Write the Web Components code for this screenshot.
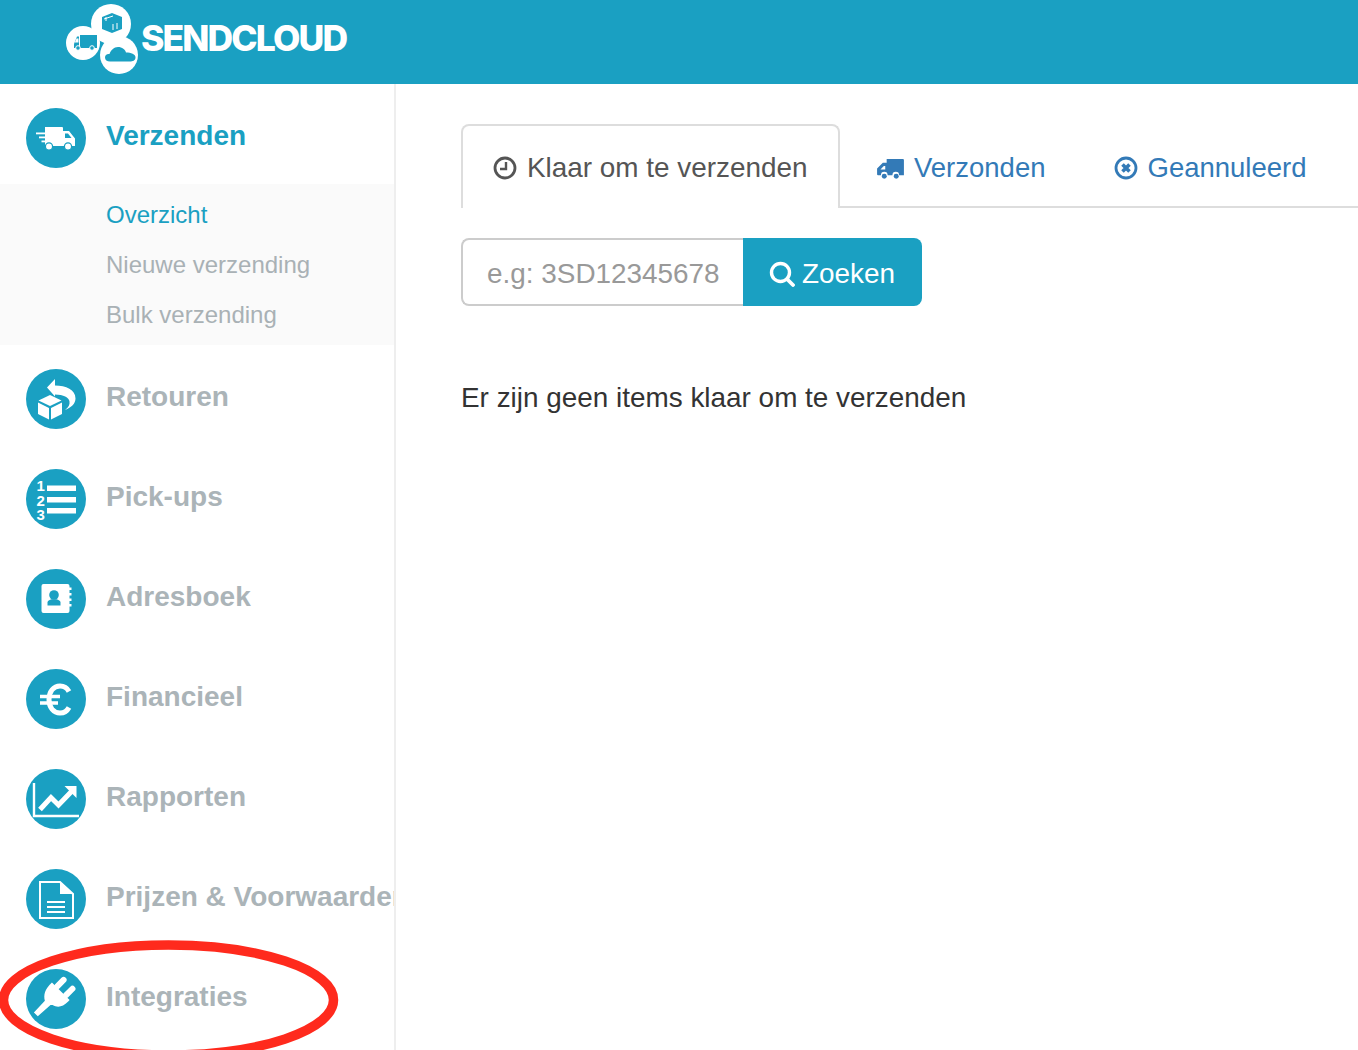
<!DOCTYPE html>
<html lang="nl">
<head>
<meta charset="utf-8">
<title>Sendcloud</title>
<style>
  html, body { margin: 0; height: 1050px; overflow: hidden; background: #fff; }
  body { font-family: "Liberation Sans", Arial, sans-serif; color: #333; }
</style>
</head>
<body>
<sc-app>
  <sc-header slot="header"></sc-header>

  <sc-sidebar slot="sidebar">
    <sc-nav-item active label="Verzenden">
      <svg slot="icon" viewBox="0 0 60 60" width="60" height="60" fill="#fff">
        <path d="M19 19h17a1 1 0 0 1 1 1v3h6l6 7.500v7.500h-30z"/>
        <path fill="#1aa0c2" d="M39 25.500h3l3.500 4.500h-6.500z"/>
        <rect x="10" y="24.500" width="9" height="1.800"/>
        <rect x="13" y="28.500" width="6" height="1.800"/>
        <rect x="15.500" y="32.500" width="3.500" height="1.800"/>
        <circle cx="23" cy="38.500" r="3.600" stroke="#1aa0c2" stroke-width="1.300"/>
        <circle cx="42" cy="38.500" r="3.600" stroke="#1aa0c2" stroke-width="1.300"/>
      </svg>
    </sc-nav-item>
    <sc-sub-nav>
      <sc-sub-item active>Overzicht</sc-sub-item>
      <sc-sub-item>Nieuwe verzending</sc-sub-item>
      <sc-sub-item>Bulk verzending</sc-sub-item>
    </sc-sub-nav>
    <sc-nav-item label="Retouren">
      <svg slot="icon" viewBox="0 0 60 60" width="60" height="60" fill="#fff">
        <path d="M24 26l11.500 5.500-11.500 5.500-11.500-5.500z"/>
        <path d="M12 33.500l11 5.500v11.500l-11-5.500zM25 39l11-5.500v11.500l-11 5.500z"/>
        <path d="M21 18.500l8-8.500v6.500c11 0 20.500 4 20.500 13 0 5-4 9-10.500 11.500 3.500-2.500 5-5.500 4.500-8.500-.5-4-6-7-14.500-7v2z"/>
      </svg>
    </sc-nav-item>
    <sc-nav-item label="Pick-ups">
      <svg slot="icon" viewBox="0 0 60 60" width="60" height="60" fill="#fff">
        <text x="10.500" y="22" font-family="Liberation Sans" font-weight="700" font-size="15">1</text>
        <text x="10.500" y="36.500" font-family="Liberation Sans" font-weight="700" font-size="15">2</text>
        <text x="10.500" y="51" font-family="Liberation Sans" font-weight="700" font-size="15">3</text>
        <rect x="21" y="16.500" width="29" height="5.500"/>
        <rect x="21" y="28" width="29" height="5.500"/>
        <rect x="21" y="39" width="29" height="5.500"/>
      </svg>
    </sc-nav-item>
    <sc-nav-item label="Adresboek">
      <svg slot="icon" viewBox="0 0 60 60" width="60" height="60">
        <path fill="#fff" d="M17.500 15h24a2 2 0 0 1 2 2v1.500h2v2.500h-2v3h2v2.500h-2v3h2v2.500h-2v3h2v2.500h-2v4.500a2 2 0 0 1-2 2h-24a2 2 0 0 1-2-2v-25a2 2 0 0 1 2-2z"/>
        <circle cx="28" cy="26" r="4.800" fill="#1aa0c2"/>
        <path fill="#1aa0c2" d="M21.500 36.500v-3c0-1.800 2-2.800 4-3.300h5c2 .5 4 1.500 4 3.300v3z"/>
      </svg>
    </sc-nav-item>
    <sc-nav-item label="Financieel">
      <svg slot="icon" viewBox="0 0 60 60" width="60" height="60" fill="none" stroke="#fff">
        <path stroke-width="5" d="M43 22.500c-2-3.800-5-5.500-9-5.500-6.500 0-11 5.500-11 13.500s4.500 13.500 11 13.500c4 0 7-1.700 9-5.500"/>
        <path stroke-width="3.400" d="M14 27.500h20M14 34h18"/>
      </svg>
    </sc-nav-item>
    <sc-nav-item label="Rapporten">
      <svg slot="icon" viewBox="0 0 60 60" width="60" height="60">
        <path fill="none" stroke="#fff" stroke-width="2.400" d="M8 14v33h45"/>
        <path fill="none" stroke="#fff" stroke-width="5" d="M14 40.500l11-12 7.500 7.500 13-13.500"/>
        <path fill="#fff" d="M38.500 17h12v12z"/>
      </svg>
    </sc-nav-item>
    <sc-nav-item label="Prijzen &amp; Voorwaarden">
      <svg slot="icon" viewBox="0 0 60 60" width="60" height="60">
        <path fill="none" stroke="#fff" stroke-width="2" d="M14 13h20l13 12v24h-33z"/>
        <path fill="#fff" d="M34 13v12h13z"/>
        <path fill="none" stroke="#fff" stroke-width="2" d="M21 33h18M21 38h18M21 43h18"/>
      </svg>
    </sc-nav-item>
    <sc-nav-item label="Integraties">
      <svg slot="icon" viewBox="0 0 60 60" width="60" height="60" fill="#fff">
        <path d="M14.500 19h25v2c0 8-3 12-8.500 13.500l-1.500 1.500-1 17h-5.500l-.5-16c-5-3-8.500-8-8-18z" transform="rotate(45 27 30)"/>
        <rect x="18" y="6" width="6" height="15" rx="3" transform="rotate(45 27 30)"/>
        <rect x="30.500" y="6" width="6" height="15" rx="3" transform="rotate(45 27 30)"/>
      </svg>
    </sc-nav-item>
  </sc-sidebar>

  <sc-main slot="main">
    <sc-tabs>
      <sc-tab active label="Klaar om te verzenden">
        <svg slot="icon" viewBox="0 0 24 24" width="24" height="24" fill="none" stroke="#555">
          <circle cx="12" cy="12" r="10" stroke-width="2.800"/>
          <path stroke-width="2.400" d="M13 6v7h-6"/>
        </svg>
      </sc-tab>
      <sc-tab label="Verzonden">
        <svg slot="icon" viewBox="0 0 28 24" width="27" height="23" fill="#337ab7">
          <path d="M10 2h17a1 1 0 0 1 1 1v16h-5a3.500 3.500 0 0 0-7 0h-5a3.500 3.500 0 0 0-7 0h-3a1 1 0 0 1-1-1v-6l6-6h4z"/>
          <path fill="#fff" d="M3.500 13l3.500-3.500h1.500v3.500z"/>
          <circle cx="7.500" cy="20" r="2.600"/><circle cx="20" cy="20" r="2.600"/>
        </svg>
      </sc-tab>
      <sc-tab label="Geannuleerd">
        <svg slot="icon" viewBox="0 0 24 24" width="24" height="24" fill="none" stroke="#337ab7">
          <circle cx="12" cy="12" r="10" stroke-width="2.800"/>
          <path stroke-width="3.600" d="M8.500 8.500l7 7M15.500 8.500l-7 7"/>
        </svg>
      </sc-tab>
    </sc-tabs>
    <sc-search placeholder="e.g: 3SD12345678" action="Zoeken"></sc-search>
    <sc-empty>Er zijn geen items klaar om te verzenden</sc-empty>
  </sc-main>

  <sc-annotation slot="overlay"></sc-annotation>
</sc-app>

<script>
// small helper so every element just declares its shadow markup
function shadow(el, html) {
  const root = el.attachShadow({ mode: "open" });
  root.innerHTML = html;
  return root;
}

class ScApp extends HTMLElement {
  constructor() {
    super();
    shadow(this, `
      <style>
        :host { display: block; position: relative; width: 1358px; height: 1050px; overflow: hidden; }
        .body { display: flex; height: 966px; }
      </style>
      <slot name="header"></slot>
      <div class="body">
        <slot name="sidebar"></slot>
        <slot name="main"></slot>
      </div>
      <slot name="overlay"></slot>
    `);
  }
}

class ScHeader extends HTMLElement {
  constructor() {
    super();
    shadow(this, `
      <style>
        :host { display: flex; align-items: flex-start; height: 84px; background: #1aa0c2; padding-left: 66px; }
        svg { display: block; flex: none; }
        .name {
          font: 800 35.500px/78px Inter, Lato, "Liberation Sans", sans-serif;
          color: #fff;
          letter-spacing: -1.900px;
          margin-left: 3px;
        }
      </style>
      <svg viewBox="0 0 72 74" width="72" height="74">
        <circle cx="17" cy="43" r="17" fill="#fff"/>
        <circle cx="45" cy="24" r="20" fill="#fff"/>
        <circle cx="53" cy="55" r="19" fill="#fff"/>
        <path fill="#1aa0c2" d="M14 35h17v13h-17zM13 36.500v11.500h-5v-4l3-7.500z"/>
        <path fill="#fff" d="M10.500 38.500h2v4h-3.700z"/>
        <circle cx="12" cy="48" r="2.300" fill="#1aa0c2" stroke="#fff"/>
        <circle cx="26" cy="48" r="2.300" fill="#1aa0c2" stroke="#fff"/>
        <path fill="#1aa0c2" d="M46 13l10 4v12l-10 4-10-4v-12z"/>
        <path fill="none" stroke="#fff" stroke-width="1" d="M38 19l9-3M40 17v4M47 30v-6M51 29v-6"/>
        <path fill="#1aa0c2" d="M44 61.500c-3 0-5-1.500-5-4s2-4 4.500-3.500c1-3.500 4.500-7 8.500-7s7.500 2.500 8 5.500c5 0 9.500 1.500 9.500 5 0 3-3 4-5.500 4z"/>
      </svg>
      <span class="name">SENDCLOUD</span>
    `);
  }
}

class ScSidebar extends HTMLElement {
  constructor() {
    super();
    shadow(this, `
      <style>
        :host {
          display: block;
          flex: none;
          width: 394px;
          height: 966px;
          overflow: hidden;
          border-right: 2px solid #eee;
        }
      </style>
      <slot></slot>
    `);
  }
}

class ScNavItem extends HTMLElement {
  constructor() {
    super();
    const root = shadow(this, `
      <style>
        :host {
          display: flex;
          align-items: center;
          gap: 20px;
          box-sizing: border-box;
          height: 100px;
          padding: 24px 0 16px 26px;
          white-space: nowrap;
        }
        .icon { flex: none; width: 60px; height: 60px; border-radius: 50%; background: #1aa0c2; overflow: hidden; }
        ::slotted(svg) { display: block; }
        .label { font: 700 28px/40px "Liberation Sans", Arial, sans-serif; color: #abb4b8; margin-top: -5px; }
        :host([active]) .label { color: #1aa0c2; }
      </style>
      <span class="icon"><slot name="icon"></slot></span>
      <span class="label"></span>
    `);
    root.querySelector(".label").textContent = this.getAttribute("label");
  }
}

class ScSubNav extends HTMLElement {
  constructor() {
    super();
    shadow(this, `
      <style>
        :host { display: block; height: 161px; box-sizing: border-box; padding-top: 6px; background: #fafafa; }
      </style>
      <slot></slot>
    `);
  }
}

class ScSubItem extends HTMLElement {
  constructor() {
    super();
    shadow(this, `
      <style>
        :host {
          display: block;
          padding-left: 106px;
          font: 400 24px/50px "Liberation Sans", Arial, sans-serif;
          color: #a9b1b5;
        }
        :host([active]) { color: #1aa0c2; }
      </style>
      <slot></slot>
    `);
  }
}

class ScMain extends HTMLElement {
  constructor() {
    super();
    shadow(this, `
      <style>
        :host { display: block; flex: 1; min-width: 0; padding: 40px 0 0 65px; }
      </style>
      <slot></slot>
    `);
  }
}

class ScTabs extends HTMLElement {
  constructor() {
    super();
    shadow(this, `
      <style>
        :host { display: flex; height: 84px; box-sizing: border-box; border-bottom: 2px solid #ddd; }
      </style>
      <slot></slot>
    `);
  }
}

class ScTab extends HTMLElement {
  constructor() {
    super();
    const root = shadow(this, `
      <style>
        :host {
          display: flex;
          align-items: center;
          gap: 10px;
          height: 84px;
          box-sizing: border-box;
          padding: 4px 34px 0;
          font: 400 27.500px/40px "Liberation Sans", Arial, sans-serif;
          color: #337ab7;
          white-space: nowrap;
        }
        :host([active]) {
          margin-right: 3px;
          width: 379px;
          padding: 2px 0 0 30px;
          font-size: 27.900px;
          color: #555;
          background: #fff;
          border: 2px solid #ddd;
          border-bottom: 0;
          border-radius: 8px 8px 0 0;
        }
        ::slotted(svg) { display: block; flex: none; }
      </style>
      <slot name="icon"></slot>
      <span class="label"></span>
    `);
    root.querySelector(".label").textContent = this.getAttribute("label");
  }
}

class ScSearch extends HTMLElement {
  constructor() {
    super();
    const root = shadow(this, `
      <style>
        :host { display: flex; height: 68px; margin-top: 30px; font: 400 27.900px/40px "Liberation Sans", Arial, sans-serif; }
        input {
          box-sizing: border-box;
          width: 282px;
          height: 68px;
          margin: 0;
          padding: 3px 20px 0 24px;
          border: 2px solid #ccc;
          border-right: 0;
          border-radius: 8px 0 0 8px;
          outline: 0;
          font: inherit;
          color: #555;
          background: #fff;
        }
        input::placeholder { color: #999; opacity: 1; }
        button {
          display: flex;
          align-items: center;
          gap: 7px;
          box-sizing: border-box;
          width: 179px;
          height: 68px;
          padding: 3px 0 0 26px;
          border: 0;
          border-radius: 0 8px 8px 0;
          background: #1aa0c2;
          color: #fff;
          font: inherit;
        }
        svg { display: block; flex: none; }
      </style>
      <input type="text">
      <button type="button">
        <svg viewBox="0 0 26 26" width="26" height="26" fill="none" stroke="#fff" stroke-linecap="round">
          <circle cx="11.500" cy="11.500" r="9" stroke-width="3.400"/>
          <path stroke-width="3.800" d="M18 18l6 6"/>
        </svg>
        <span class="action"></span>
      </button>
    `);
    root.querySelector("input").placeholder = this.getAttribute("placeholder");
    root.querySelector(".action").textContent = this.getAttribute("action");
  }
}

class ScEmpty extends HTMLElement {
  constructor() {
    super();
    shadow(this, `
      <style>
        :host { display: block; margin-top: 72px; font: 400 27.900px/40px "Liberation Sans", Arial, sans-serif; color: #333; }
      </style>
      <slot></slot>
    `);
  }
}

// the hand drawn red ring lies over the sidebar
class ScAnnotation extends HTMLElement {
  constructor() {
    super();
    shadow(this, `
      <style>
        :host { display: block; position: absolute; left: 0; top: 930px; width: 350px; height: 120px; pointer-events: none; }
        svg { display: block; }
      </style>
      <svg viewBox="0 0 350 120" width="350" height="120">
        <ellipse cx="168.500" cy="70" rx="165" ry="55" fill="none" stroke="#ff2a1d" stroke-width="9.500"/>
      </svg>
    `);
  }
}

customElements.define("sc-app", ScApp);
customElements.define("sc-header", ScHeader);
customElements.define("sc-sidebar", ScSidebar);
customElements.define("sc-nav-item", ScNavItem);
customElements.define("sc-sub-nav", ScSubNav);
customElements.define("sc-sub-item", ScSubItem);
customElements.define("sc-main", ScMain);
customElements.define("sc-tabs", ScTabs);
customElements.define("sc-tab", ScTab);
customElements.define("sc-search", ScSearch);
customElements.define("sc-empty", ScEmpty);
customElements.define("sc-annotation", ScAnnotation);
</script>
</body>
</html>
